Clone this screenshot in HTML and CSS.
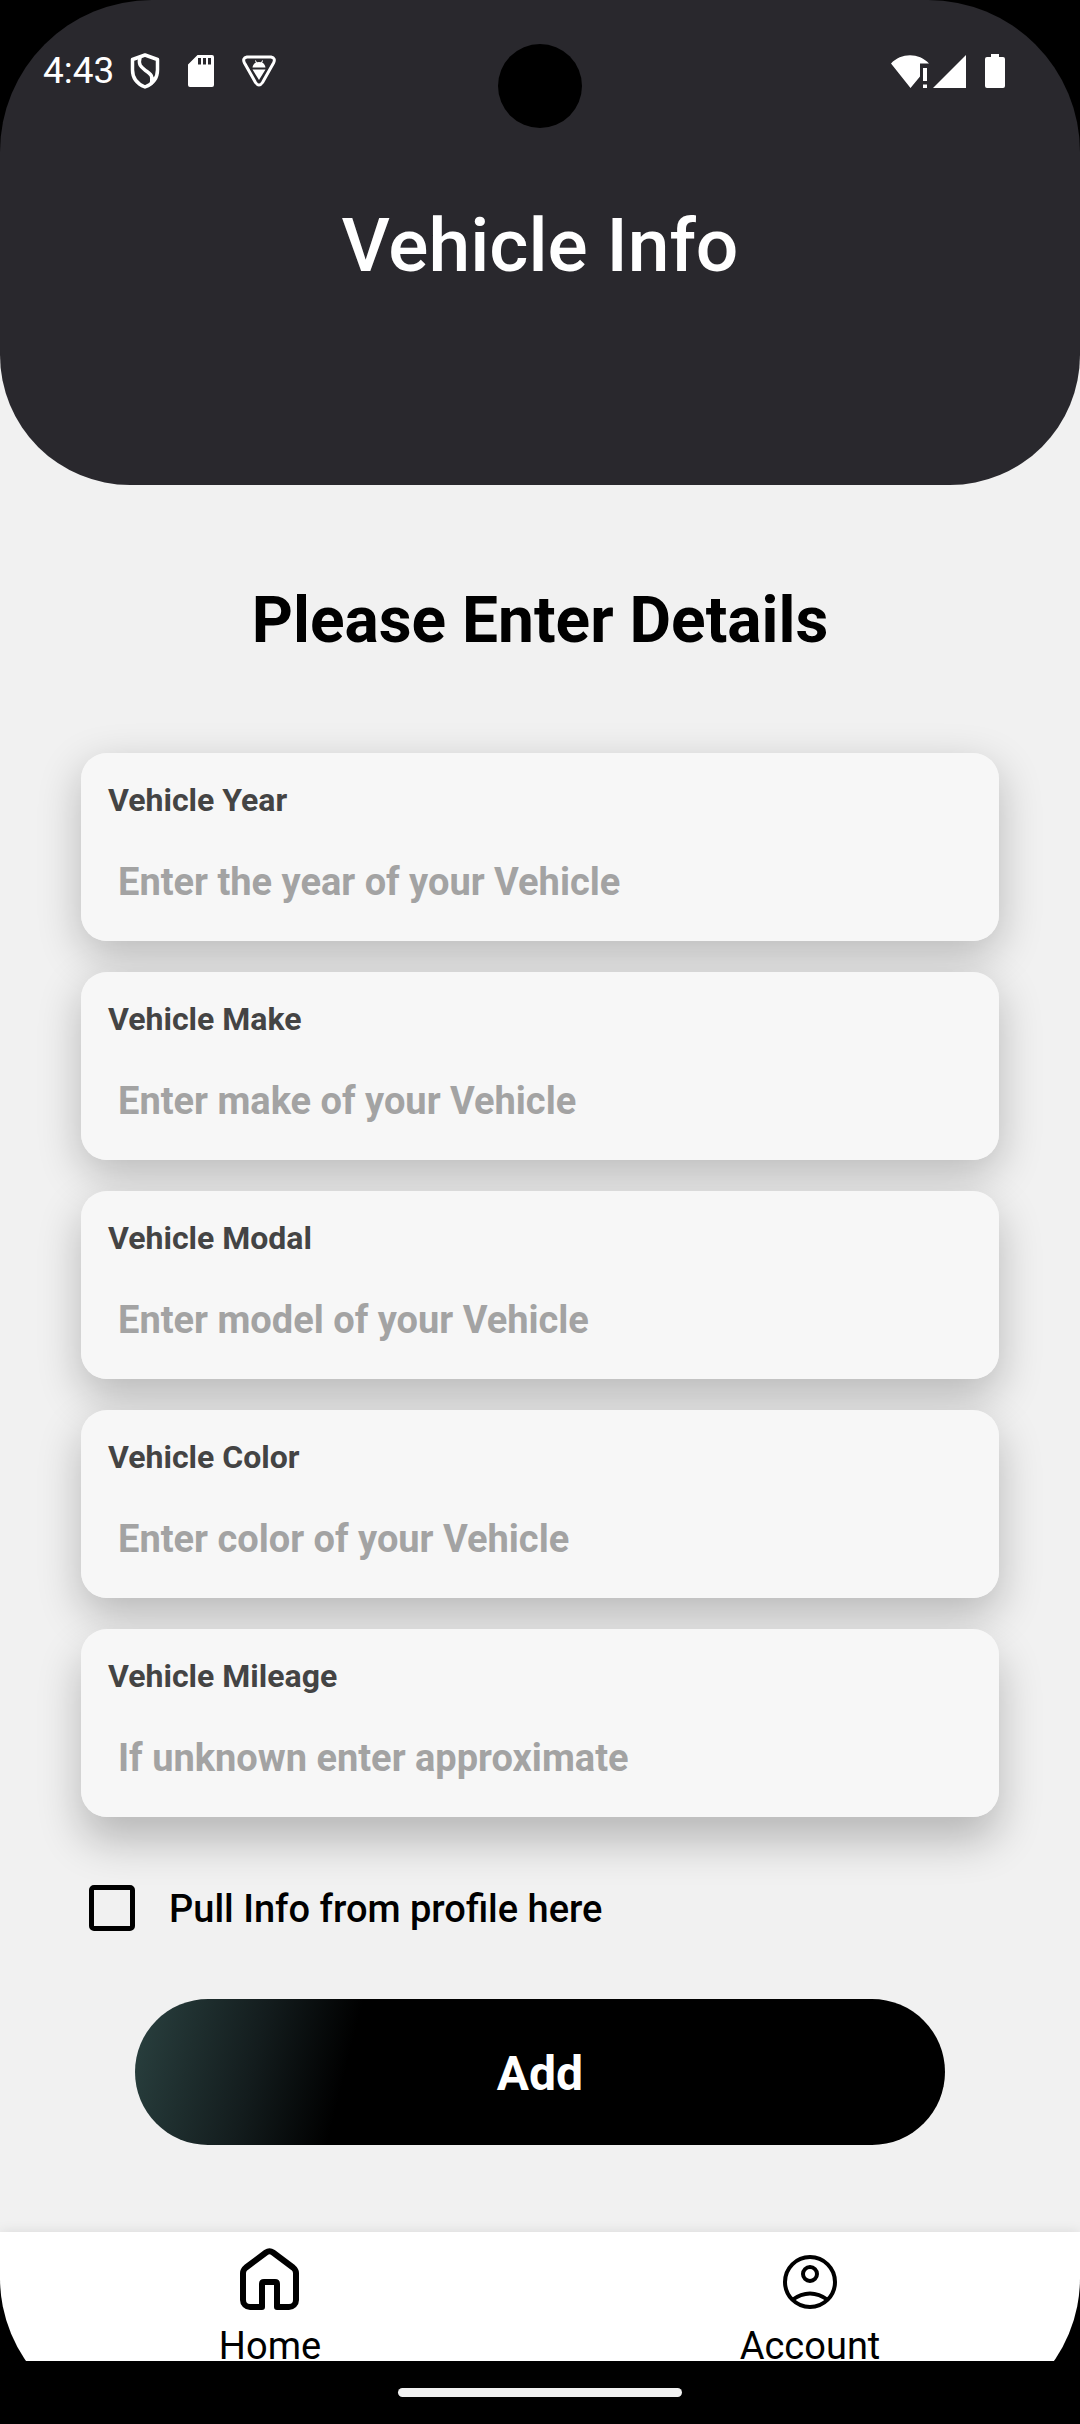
FILE: index.html
```html
<!DOCTYPE html>
<html lang="en">
<head>
<meta charset="utf-8">
<meta name="viewport" content="width=device-width, initial-scale=1">
<title>Vehicle Info</title>
<link rel="stylesheet" href="styles.css">
</head>
<body>
<div class="screen">
  <header class="header">
    <div class="status-bar">
      <div class="status-group status-left">
        <span class="clock">4:43</span>
        <svg width="30" height="36" viewBox="0 0 30 36" fill="none" stroke="#fff" stroke-width="3.500" stroke-linejoin="round" stroke-linecap="round" aria-hidden="true">
          <path d="M15 2 27.500 6.500V17c0 8-5 14-12.500 17C7.500 31 2.500 25 2.500 17V6.500Z"/>
          <path d="M10 4.500C8 12 11 14 15.500 17.500 21 21 23 23 21.500 30"/>
          <path d="M15 2 10 4v4M24 25l-3 5v-4" stroke-width="2"/>
        </svg>
        <svg width="26" height="32" viewBox="0 0 26 32" aria-hidden="true">
          <path fill="#fff" fill-rule="evenodd" d="M9.500 0H24a2 2 0 0 1 2 2v28a2 2 0 0 1-2 2H2a2 2 0 0 1-2-2V9.500ZM10 3v6.500h3V3Zm5 0v6.500h3V3Zm5 0v6.500h3V3Z"/>
        </svg>
        <svg width="34" height="32" viewBox="0 0 34 32" aria-hidden="true">
          <path d="M5 2H29q5 1 2.500 6L20.500 27.500Q17 32.500 13.500 27.500L2.500 8Q0 3 5 2Z" fill="none" stroke="#fff" stroke-width="3" stroke-linejoin="round"/>
          <path fill="#fff" d="M10.500 12.500c.4-2.400 1.600-4 3.400-5l-1-1.700.8-.5 1.200 1.900q2.100-.6 4.200 0l1.200-1.900.8.5-1 1.700c1.800 1 3 2.600 3.400 5ZM10.500 14.500h13L17 25Z"/>
        </svg>
      </div>
      <div class="status-group status-right">
        <svg width="38" height="33" viewBox="0 0 38 33" fill="#fff" aria-hidden="true">
          <path d="M0 8.500C10-2.500 28-2.500 38 8.500H29V21.500L19.500 33Z"/>
          <path d="M32 13h4v13h-4zM32 29.500h4v3.500h-4z"/>
        </svg>
        <svg width="33" height="33" viewBox="0 0 33 33" fill="#fff" aria-hidden="true"><path d="M33 0V33H0Z"/></svg>
        <svg class="icon-battery" width="20" height="34" viewBox="0 0 20 34" fill="#fff" aria-hidden="true"><path d="M6 0h8v3h4a2 2 0 0 1 2 2v27a2 2 0 0 1-2 2H2a2 2 0 0 1-2-2V5a2 2 0 0 1 2-2h4Z"/></svg>
      </div>
      <span class="camera"></span>
    </div>
    <h1 class="title">Vehicle Info</h1>
  </header>

  <main class="content">
    <h2 class="heading">Please Enter Details</h2>
    <form class="form">
      <div class="fields">
        <div class="field">
          <label class="field-label" for="year">Vehicle Year</label>
          <input class="field-input" id="year" type="text" placeholder="Enter the year of your Vehicle">
        </div>
        <div class="field">
          <label class="field-label" for="make">Vehicle Make</label>
          <input class="field-input" id="make" type="text" placeholder="Enter make of your Vehicle">
        </div>
        <div class="field">
          <label class="field-label" for="model">Vehicle Modal</label>
          <input class="field-input" id="model" type="text" placeholder="Enter model of your Vehicle">
        </div>
        <div class="field">
          <label class="field-label" for="color">Vehicle Color</label>
          <input class="field-input" id="color" type="text" placeholder="Enter color of your Vehicle">
        </div>
        <div class="field">
          <label class="field-label" for="mileage">Vehicle Mileage</label>
          <input class="field-input" id="mileage" type="text" placeholder="If unknown enter approximate">
        </div>
      </div>
      <div class="check-row">
        <input class="check" id="pull" type="checkbox">
        <label class="check-label" for="pull">Pull Info from profile here</label>
      </div>
      <button class="add-button" type="button">Add</button>
    </form>
  </main>

  <nav class="tab-bar">
    <a class="tab" href="#home">
      <svg width="60" height="62" viewBox="0 0 60 62" fill="none" stroke="#000" stroke-width="6" stroke-linejoin="round" aria-hidden="true">
        <path d="M22 59H10a7 7 0 0 1-7-7V25q0-3 3-5.500L26 4.500q3.500-2.500 7 0L53 19.500q3 2.500 3 5.500V52a7 7 0 0 1-7 7H37V36q0-2-2-2H24q-2 0-2 2Z"/>
      </svg>
      <span class="tab-label">Home</span>
    </a>
    <a class="tab" href="#account">
      <svg width="60" height="62" viewBox="0 0 60 62" fill="none" stroke="#000" stroke-width="4" aria-hidden="true">
        <circle cx="30" cy="34" r="25"/>
        <circle cx="30" cy="26" r="7"/>
        <path d="M12 52Q30 39 48 52"/>
      </svg>
      <span class="tab-label">Account</span>
    </a>
  </nav>
  <footer class="system-bar"><span class="gesture-handle"></span></footer>
</div>
</body>
</html>
```

FILE: styles.css
```css
* {
  box-sizing: border-box;
  margin: 0;
}

body {
  background: #000;
  color: #000;
  font-family: Roboto, "Noto Sans", sans-serif;
  font-size: 38px;
}

svg {
  display: block;
  flex: none;
}

.screen {
  display: flex;
  flex-direction: column;
  min-height: 100vh;
  overflow: hidden;
  border-radius: 152px 152px 146px 146px;
}

/* Header and system status */

.header {
  position: relative;
  z-index: 1;
  padding-bottom: 196px;
  border-radius: 0 0 130px 130px;
  background: #29282d;
  color: #fff;
}

.status-bar {
  position: relative;
  display: flex;
  align-items: center;
  justify-content: space-between;
  height: 142px;
  padding: 0 75px 0 43px;
}

.status-group {
  display: flex;
  align-items: center;
}

.status-left {
  gap: 28px;
}

.clock {
  margin-right: -12px;
  font-size: 37px;
  line-height: 44px;
}

.status-right {
  gap: 4px;
}

.icon-battery {
  margin-left: 15px;
}

.camera {
  position: absolute;
  top: 44px;
  left: 50%;
  width: 84px;
  height: 84px;
  margin-left: -42px;
  border-radius: 50%;
  background: #000;
}

.title {
  margin-top: 59px;
  font-size: 75px;
  font-weight: 500;
  line-height: 88px;
  text-align: center;
}

/* Form: the panel reaches up behind the header's rounded corners */

.content {
  flex: 1;
  margin-top: -130px;
  padding: 228px 7.5% 86px;
  background: #f1f1f1;
}

.heading {
  font-size: 64px;
  font-weight: 700;
  line-height: 76px;
  text-align: center;
}

.form {
  isolation: isolate;
  margin-top: 94px;
}

.fields {
  display: flex;
  flex-direction: column;
  gap: 31px;
}

.field {
  --drop: 14px;
  position: relative;
  padding: 28px 27px 37px;
  border-radius: 26px;
  background: #f7f7f7;
}

/* The shadow sits on its own layer so that it never falls on the card above */
.field::before {
  content: "";
  position: absolute;
  z-index: -1;
  inset: 0;
  border-radius: 26px;
  box-shadow: 0 var(--drop) 44px rgba(0, 0, 0, 0.24);
}

.field:nth-child(n + 3) {
  --drop: 18px;
}

.field:nth-child(n + 5) {
  --drop: 24px;
}

.field-label {
  display: block;
  color: #444;
  font-size: 32px;
  font-weight: 700;
  line-height: 38px;
}

.field-input {
  display: block;
  width: 100%;
  height: 44px;
  margin-top: 41px;
  padding: 0 10px;
  border: 0;
  outline: 0;
  background: none;
  color: #444;
  font: 700 38px/44px Roboto, "Noto Sans", sans-serif;
}

.field-input::placeholder {
  color: #a3a3a3;
  opacity: 1;
}

.check-row {
  display: flex;
  align-items: flex-end;
  gap: 34px;
  margin-top: 68px;
  padding-left: 8px;
}

.check {
  flex: none;
  width: 46px;
  height: 46px;
  border: 5px solid #000;
  border-radius: 5px;
  appearance: none;
}

.check:checked {
  background: #000;
}

.check-label {
  font-size: 38px;
  font-weight: 500;
  line-height: 44px;
}

.add-button {
  display: block;
  width: calc(100% - 108px);
  height: 146px;
  margin: 68px auto 0;
  padding: 4px 0 0;
  border: 0;
  border-radius: 73px;
  background: linear-gradient(104deg, #2a4140 0%, #131c1d 16%, #000 27%);
  color: #fff;
  font: 700 48px/56px Roboto, "Noto Sans", sans-serif;
}

/* Bottom navigation */

.tab-bar {
  display: flex;
  background: #fff;
  box-shadow: 0 0 12px rgba(0, 0, 0, 0.1);
}

.tab {
  display: flex;
  flex: 1;
  flex-direction: column;
  align-items: center;
  gap: 22px;
  padding: 16px 0 1px;
  color: #000;
  text-decoration: none;
}

.tab-label {
  font-size: 38px;
  line-height: 28px;
}

.system-bar {
  display: flex;
  align-items: center;
  justify-content: center;
  height: 63px;
  background: #000;
}

.gesture-handle {
  width: 284px;
  height: 9px;
  border-radius: 5px;
  background: #f1f1f1;
}
```
